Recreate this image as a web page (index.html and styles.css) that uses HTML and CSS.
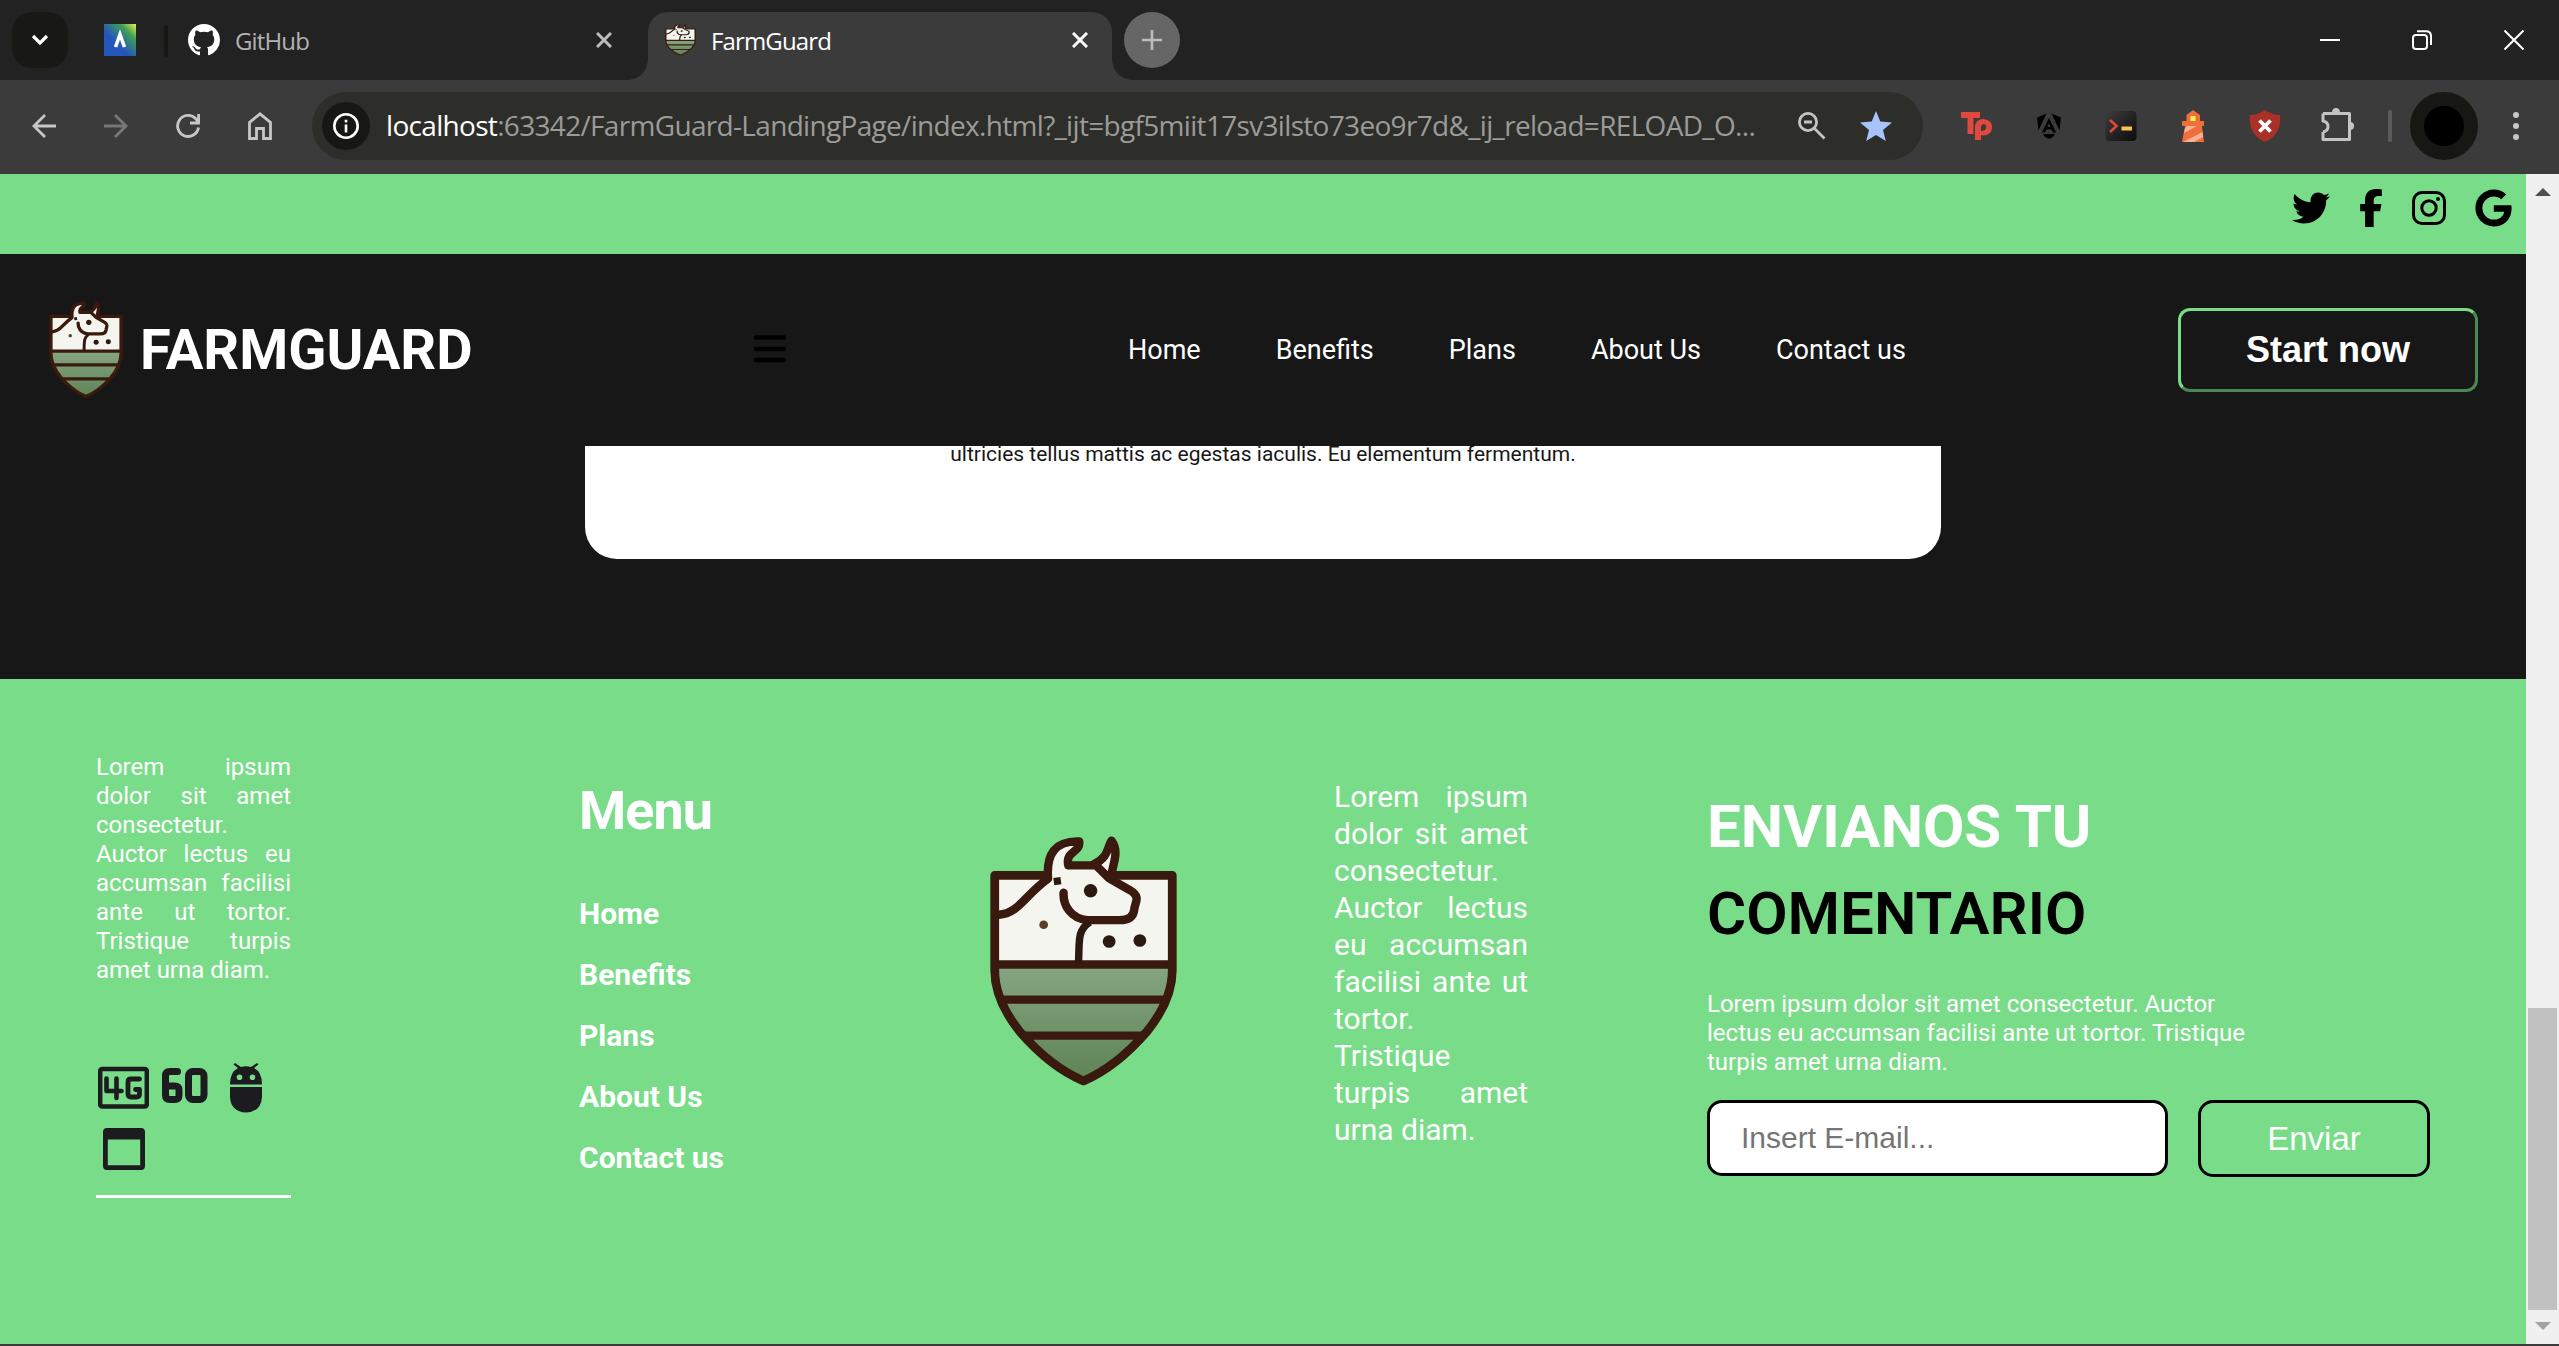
FILE: index.html
```html
<!DOCTYPE html>
<html lang="en">
<head>
<meta charset="utf-8">
<title>FarmGuard</title>
<link rel="stylesheet" href="styles.css">
</head>
<body>
<svg class="defs" aria-hidden="true">
  <defs>
    <linearGradient id="field" x1="0" y1="0" x2="0" y2="1"><stop offset="0" stop-color="#86a581"/><stop offset="1" stop-color="#5c8254"/></linearGradient>
    <linearGradient id="tile" x1="0" y1="1" x2="1" y2="0"><stop offset=".4" stop-color="#2456bd"/><stop offset=".75" stop-color="#3fa056"/><stop offset="1" stop-color="#e8f04a"/></linearGradient>
    <linearGradient id="term" x1="0" y1="0" x2="1" y2="1"><stop offset="0" stop-color="#3c3c3c"/><stop offset="1" stop-color="#0c0c0c"/></linearGradient>
    <clipPath id="shieldclip"><path d="M112 196H634V480Q634 570 560 665Q470 768 373 810Q275 768 187 665Q112 570 112 480Z"/></clipPath>
    <symbol id="shield" viewBox="96 78 554 752" preserveAspectRatio="none">
      <g clip-path="url(#shieldclip)">
        <rect x="100" y="190" width="550" height="275" fill="#f5f5ef"/>
        <rect x="100" y="465" width="550" height="360" fill="url(#field)"/>
        <path d="M100 463H650M100 568H650M100 676H650" stroke="#3a1a0e" stroke-width="25"/>
      </g>
      <path d="M110 196H636V480Q636 570 560 665Q470 770 373 812Q275 770 185 665Q110 570 110 480Z" fill="none" stroke="#3a1a0e" stroke-width="26" stroke-linejoin="round"/>
      <path d="M268 210C262 130 290 95 362 95C366 125 322 125 326 168H412C446 150 440 120 455 92C480 120 466 160 462 200L500 240L400 320L300 240Z" fill="#f5f5ef"/>
      <path d="M122 314C180 310 195 260 268 206C262 130 290 92 360 94C366 128 318 122 328 166H410L448 204L510 240C545 262 525 275 523 300C520 322 505 330 480 330H385C335 325 312 285 314 248" fill="none" stroke="#3a1a0e" stroke-width="25" stroke-linecap="round" stroke-linejoin="round"/>
      <path d="M405 162C448 140 442 115 456 92C480 125 460 160 456 195" fill="none" stroke="#3a1a0e" stroke-width="25" stroke-linecap="round" stroke-linejoin="round"/>
      <path d="M285 215L306 212M392 336C352 360 362 400 358 460" fill="none" stroke="#2c1a10" stroke-width="22"/>
      <circle cx="394" cy="242" r="20" fill="#2c1a10"/><circle cx="449" cy="394" r="19" fill="#2c1a10"/><circle cx="540" cy="391" r="19" fill="#2c1a10"/><circle cx="255" cy="344" r="13" fill="#5c3d26"/>
    </symbol>
  </defs>
</svg>

<div class="tabstrip">
  <div class="tab-search"><svg width="18" height="12" viewBox="0 0 18 12"><path d="M2 2L9 9L16 2" fill="none" stroke="#fff" stroke-width="3.2"/></svg></div>
  <svg class="pinned" width="32" height="32" viewBox="0 0 32 32"><rect width="32" height="32" fill="url(#tile)"/><path d="M11.500 23L16 10.500L20.500 23" fill="none" stroke="#fff" stroke-width="3.600"/></svg>
  <div class="tab-sep"></div>
  <div class="tab">
    <svg width="32" height="32" viewBox="0 0 16 16"><path fill="#fff" d="M8 0C3.58 0 0 3.58 0 8c0 3.54 2.29 6.53 5.47 7.59.4.07.55-.17.55-.38 0-.19-.01-.82-.01-1.49-2.01.37-2.53-.49-2.69-.94-.09-.23-.48-.94-.82-1.13-.28-.15-.68-.52-.01-.53.63-.01 1.08.58 1.23.82.72 1.21 1.87.87 2.33.66.07-.52.28-.87.51-1.07-1.78-.2-3.64-.89-3.64-3.95 0-.87.31-1.59.82-2.15-.08-.2-.36-1.02.08-2.12 0 0 .67-.21 2.2.82.64-.18 1.32-.27 2-.27.68 0 1.36.09 2 .27 1.53-1.04 2.2-.82 2.2-.82.44 1.1.16 1.92.08 2.12.51.56.82 1.27.82 2.15 0 3.07-1.87 3.75-3.65 3.95.29.25.54.73.54 1.48 0 1.07-.01 1.93-.01 2.2 0 .21.15.46.55.38A8.013 8.013 0 0016 8c0-4.42-3.58-8-8-8z"/></svg>
    <span class="tab-title">GitHub</span>
    <svg class="tab-close" width="16" height="16" viewBox="0 0 16 16"><path d="M1 1L15 15M15 1L1 15" stroke="#bdbdbd" stroke-width="3"/></svg>
  </div>
  <div class="tab tab-active">
    <svg width="31" height="32" viewBox="0 0 31 32"><use href="#shield" width="31" height="32"/></svg>
    <span class="tab-title">FarmGuard</span>
    <svg class="tab-close" width="16" height="16" viewBox="0 0 16 16"><path d="M1 1L15 15M15 1L1 15" stroke="#fff" stroke-width="3"/></svg>
  </div>
  <div class="newtab"><svg width="20" height="20" viewBox="0 0 20 20"><path d="M10 0V20M0 10H20" stroke="#bdbdbd" stroke-width="2.600"/></svg></div>
  <div class="window-buttons">
    <svg width="20" height="20" viewBox="0 0 20 20"><path d="M0 10H20" stroke="#fff" stroke-width="2"/></svg>
    <svg width="20" height="20" viewBox="0 0 20 20" fill="none" stroke="#fff" stroke-width="2"><rect x="1" y="5" width="14" height="14" rx="3"/><path d="M5 1.200H14Q19 1.200 19 6V15"/></svg>
    <svg width="20" height="20" viewBox="0 0 20 20"><path d="M.5 .5L19.500 19.500M19.500 .5L.5 19.500" stroke="#fff" stroke-width="2"/></svg>
  </div>
</div>

<div class="toolbar">
  <div class="nav-buttons">
    <svg width="24" height="24" viewBox="0 0 24 24" fill="none" stroke="#c7c7c7" stroke-width="2.800"><path d="M24 12H2M13 1L2 12L13 23"/></svg>
    <svg width="24" height="24" viewBox="0 0 24 24" fill="none" stroke="#777" stroke-width="2.800"><path d="M0 12H22M11 1L22 12L11 23"/></svg>
    <svg width="24" height="24" viewBox="0 0 24 24" fill="none" stroke="#c7c7c7" stroke-width="2.800"><path d="M22.500 13.500A10.500 10.500 0 1 1 20 5L22 8M22.600 0V9H14"/></svg>
    <svg width="24" height="28" viewBox="0 0 24 28" fill="none" stroke="#c7c7c7" stroke-width="2.800"><path d="M1.500 26.500V10.500L12 1.800L22.500 10.500V26.500H15.500V16.500H8.500V26.500Z"/></svg>
  </div>
  <div class="omnibox">
    <div class="site-info"><svg width="26" height="26" viewBox="0 0 26 26"><circle cx="13" cy="13" r="11.700" fill="none" stroke="#fff" stroke-width="2.600"/><path d="M13 11.500V19.500M13 6.800V9.400" stroke="#fff" stroke-width="2.600"/></svg></div>
    <span class="url"><b>localhost</b>:63342/FarmGuard-LandingPage/index.html?_ijt=bgf5miit17sv3ilsto73eo9r7d&amp;_ij_reload=RELOAD_O...</span>
    <svg class="zoom" width="28" height="28" viewBox="0 0 28 28" fill="none" stroke="#c4c4c4" stroke-width="2.800"><circle cx="10" cy="10" r="8.600"/><path d="M16 16L26.500 26.500M6 10H14"/></svg>
    <svg class="star" width="32" height="30" viewBox="0 0 32 30"><path fill="#a8c3fa" d="M16 0L20.300 10.500L32 11.500L23 19L25.800 30L16 24L6.200 30L9 19L0 11.500L11.700 10.500Z"/></svg>
  </div>
  <div class="extensions">
    <svg width="32" height="32" viewBox="0 0 32 32" fill="#e0493e"><path d="M0 2H19V8H12.500V24H6.500V8H0Z"/><path fill-rule="evenodd" d="M14 16Q15 9 22.500 9Q31 10 31 17Q31 25 22.500 25.500L20 25V30H14ZM20 17V21Q25 21 25.300 17Q25 14 22.500 14Q20 14.500 20 17Z"/></svg>
    <svg width="32" height="32" viewBox="0 0 32 32"><path d="M13.500 3.500L4 7.500L5.500 20.500ZM18.500 3.500L28 7.500L26.500 20.500ZM16 8L8.800 22.500H12L13.500 19.500H18.500L20 22.500H23.200ZM16 13L17.500 17H14.500ZM10 24H22L20 27L16 29L12 27Z"/></svg>
    <svg width="32" height="32" viewBox="0 0 32 32"><rect x=".5" y="1" width="31" height="30" rx="4" fill="url(#term)"/><path d="M5 10L11.500 16L5 22" fill="none" stroke="#e0483e" stroke-width="2.600"/><path d="M16.500 18.500H27" stroke="#f5c452" stroke-width="4"/></svg>
    <svg width="32" height="32" viewBox="0 0 32 32"><path fill="#ef6f3c" d="M9.500 5L16 0L23 5V11H27V16H25L27 32H5L8 16H5V11H9.500Z"/><path fill="#f7b196" d="M8 19L10 16H20L7 23ZM6 32L25.500 22L26 27L17 32Z"/><path fill="#fff04d" d="M13.500 6H18.500V11H13.500Z"/></svg>
    <svg width="32" height="32" viewBox="0 0 32 32"><path fill="#ab3128" d="M16 0Q23 5 31 5Q33 24 16 32Q-1 24 1 5Q9 5 16 0Z"/><path d="M10.500 10.500L21.500 21.500M21.500 10.500L10.500 21.500" stroke="#fff" stroke-width="3.800"/></svg>
    <svg class="puzzle" width="34" height="34" viewBox="0 0 34 34"><path d="M2 6.500H28.500V16M28.500 22V32.500H2V25M2 25Q7 24 7 19.500Q7 15 2 14V6.500M28.500 6.500V32.500" fill="none" stroke="#c4c4c4" stroke-width="3" stroke-linejoin="round"/><path fill="#c4c4c4" d="M11 6Q11 1 15 1Q19 1 19 6ZM29 15Q33 15 33 19Q33 23 29 23Z"/></svg>
  </div>
  <div class="ext-sep"></div>
  <div class="avatar"></div>
  <svg class="kebab" width="8" height="28" viewBox="0 0 8 28" fill="#c7c7c7"><circle cx="4" cy="3" r="3"/><circle cx="4" cy="14" r="3"/><circle cx="4" cy="25" r="3"/></svg>
</div>

<div class="viewport">
  <main class="page">
    <div class="social">
      <svg width="38" height="38" viewBox="0 0 512 512"><path d="M459.37 151.716c.325 4.548.325 9.097.325 13.645 0 138.72-105.583 298.558-298.558 298.558-59.452 0-114.68-17.219-161.137-47.106 8.447.974 16.568 1.299 25.34 1.299 49.055 0 94.213-16.568 130.274-44.832-46.132-.975-84.792-31.188-98.112-72.772 6.498.974 12.995 1.624 19.818 1.624 9.421 0 18.843-1.3 27.614-3.573-48.081-9.747-84.143-51.98-84.143-102.985v-1.299c13.969 7.797 30.214 12.67 47.431 13.319-28.264-18.843-46.781-51.005-46.781-87.391 0-19.492 5.197-37.36 14.294-52.954 51.655 63.675 129.3 105.258 216.365 109.807-1.624-7.797-2.599-15.918-2.599-24.04 0-57.828 46.782-104.934 104.934-104.934 30.213 0 57.502 12.67 76.67 33.137 23.715-4.548 46.456-13.32 66.599-25.34-7.798 24.366-24.366 44.833-46.132 57.827 21.117-2.273 41.584-8.122 60.426-16.243-14.292 20.791-32.161 39.308-52.628 54.253z"/></svg>
      <svg width="24" height="38" viewBox="0 0 320 512"><path d="M80 299.3V512H196V299.3h86.500l18-97.800H196V166.900c0-51.700 20.300-71.500 72.700-71.500c16.300 0 29.400 .4 37 1.200V7.900C291.400 4 256.400 0 236.200 0C129.300 0 80 50.500 80 159.400v42.100H14v97.800H80z"/></svg>
      <svg width="34" height="34" viewBox="0 0 34 34"><rect x="1.500" y="1.500" width="31" height="31" rx="8.500" fill="none" stroke="#000" stroke-width="3"/><circle cx="17" cy="17" r="7.200" fill="none" stroke="#000" stroke-width="3"/><circle cx="26" cy="8" r="2" /></svg>
      <svg width="37" height="38" viewBox="0 0 488 512"><path d="M488 261.8C488 403.3 391.1 504 248 504 110.8 504 0 393.2 0 256S110.800 8 248 8c66.800 0 123 24.500 166.300 64.900l-67.500 64.900C258.500 52.600 94.300 116.600 94.300 256c0 86.500 69.100 156.600 153.700 156.600 98.200 0 135-70.400 140.800-106.900H248v-85.300h236.100c2.300 12.700 3.900 24.900 3.900 41.400z"/></svg>
    </div>
    <header class="header">
      <svg class="brand-mark" width="74" height="98" viewBox="0 0 74 98"><use href="#shield" width="74" height="98"/></svg>
      <h1 class="brand">FARMGUARD</h1>
      <svg class="burger" width="32" height="28" viewBox="0 0 32 28"><path d="M2 2.500H30M2 14H30M2 25H30" stroke="#000" stroke-width="4.500" stroke-linecap="round"/></svg>
      <nav class="links"><a>Home</a><a>Benefits</a><a>Plans</a><a>About Us</a><a>Contact us</a></nav>
      <button class="start">Start now</button>
    </header>
    <section class="plans">
      <div class="card"><p>ultricies tellus mattis ac egestas iaculis. Eu elementum fermentum.</p></div>
    </section>
    <footer class="footer">
      <div class="about">
        <p class="small">Lorem ipsum dolor sit amet consectetur. Auctor lectus eu accumsan facilisi ante ut tortor. Tristique turpis amet urna diam.</p>
        <div class="badges">
          <svg width="51" height="50" viewBox="0 0 51 50" fill="none" stroke="#1c1b1f" stroke-linejoin="round" stroke-linecap="round"><rect x="2.200" y="6" width="46.600" height="37.500" rx="2" stroke-width="4.500"/><path stroke-width="4.600" d="M8.500 15.500V28H23.500M18.500 15.500V35"/><path stroke-width="4.800" d="M41.500 16H33Q30 16 30 19V31Q30 34 33 34H38.500Q41.500 34 41.500 31V26.500H37.500"/></svg>
          <svg width="48" height="50" viewBox="0 0 48 50" fill="none" stroke="#1c1b1f" stroke-width="7" stroke-linejoin="round" stroke-linecap="round"><path d="M16.500 8.500H9Q4.500 8.500 4.500 13V32Q4.500 36.500 9 36.500H13.500Q18 36.500 18 32.500V27Q18 23 13.500 23H5" /><rect x="27.500" y="8.500" width="15.500" height="28" rx="4.500"/></svg>
          <svg width="32" height="50" viewBox="0 0 32 50"><path fill="#1c1b1f" fill-rule="evenodd" d="M0 21.500Q0 9 8 5L3.500 1.500L5 0L11 4Q16 2.500 21 4L27 0L28.500 1.500L24 5Q32 9 32 21.500ZM9.500 11.500A2.800 2.800 0 1 0 9.500 17.100A2.800 2.800 0 1 0 9.500 11.500ZM22.500 11.500A2.800 2.800 0 1 0 22.500 17.100A2.800 2.800 0 1 0 22.500 11.500ZM0 24H32V34Q31 49 16 49.500Q1 49 0 34Z"/></svg>
          <svg width="42" height="42" viewBox="0 0 42 42"><path fill="#1c1b1f" fill-rule="evenodd" d="M4 0H38Q42 0 42 4V38Q42 42 38 42H4Q0 42 0 38V4Q0 0 4 0ZM4.800 11.500V37.200H37.200V11.500Z"/></svg>
        </div>
      </div>
      <div class="menu">
        <h2>Menu</h2>
        <a>Home</a><a>Benefits</a><a>Plans</a><a>About Us</a><a>Contact us</a>
      </div>
      <svg class="footer-mark" width="187" height="251" viewBox="0 0 187 251"><use href="#shield" width="187" height="251"/></svg>
      <p class="blurb">Lorem ipsum dolor sit amet consectetur. Auctor lectus eu accumsan facilisi ante ut tortor. Tristique turpis amet urna diam.</p>
      <div class="contact">
        <h2>ENVIANOS TU<br><span>COMENTARIO</span></h2>
        <p class="contact-text">Lorem ipsum dolor sit amet consectetur. Auctor lectus eu accumsan facilisi ante ut tortor. Tristique turpis amet urna diam.</p>
        <form class="form"><input type="text" placeholder="Insert E-mail..."><button type="button">Enviar</button></form>
      </div>
    </footer>
  </main>
  <div class="scrollbar">
    <svg width="16" height="8" viewBox="0 0 16 8"><path d="M0 8L8 0L16 8Z" fill="#505050"/></svg>
    <div class="thumb"></div>
    <svg width="16" height="8" viewBox="0 0 16 8"><path d="M0 0L8 8L16 0Z" fill="#a3a3a3"/></svg>
  </div>
</div>
</body>
</html>
```
FILE: styles.css
```css
* { box-sizing: border-box; margin: 0; padding: 0; }
body {
  width: 2559px; height: 1346px; overflow: hidden;
  display: flex; flex-direction: column;
  background: #3b3b3b; color: #fff;
  font-family: Roboto, sans-serif;
}
svg { display: block; flex: none; }
.defs { position: absolute; width: 0; height: 0; }

/* browser chrome */
.tabstrip {
  height: 80px; flex: none; padding: 12px 35px 0 12px;
  display: flex; align-items: flex-start;
  background: #222; font: 24px/56px "Open Sans", sans-serif;
}
.tab-search {
  width: 56px; height: 56px; border-radius: 20px; background: #181914;
  display: flex; align-items: center; justify-content: center;
}
.pinned { margin: 12px 28px 0 36px; }
.tab-sep { width: 4px; height: 32px; margin-top: 13px; border-radius: 2px; background: #171814; }
.tab { width: 480px; height: 68px; padding: 0 36px 12px 20px; display: flex; align-items: center; }
.tab-title { flex: 1; margin-left: 15px; padding-top: 2px; line-height: 54px; color: #b2b2b2; letter-spacing: -0.85px; }
.tab-active {
  position: relative; width: 464px; padding: 0 24px 12px 17px;
  border-radius: 20px 20px 0 0; background: #3b3b3b;
}
.tab-active .tab-title { color: #fff; }
.tab-active::before, .tab-active::after {
  content: ""; position: absolute; bottom: 0; width: 20px; height: 20px;
}
.tab-active::before { left: -20px; background: radial-gradient(circle at 0 0, #222 19.500px, #3b3b3b 20px); }
.tab-active::after { right: -20px; background: radial-gradient(circle at 100% 0, #222 19.500px, #3b3b3b 20px); }
.newtab {
  width: 56px; height: 56px; margin-left: 12px; border-radius: 50%; background: #666;
  display: flex; align-items: center; justify-content: center;
}
.window-buttons { margin: 18px 0 0 auto; display: flex; gap: 72px; }

.toolbar { height: 94px; flex: none; padding: 12px 39px 14px 32px; display: flex; align-items: center; }
.nav-buttons { width: 280px; display: flex; align-items: center; gap: 48px; }
.omnibox {
  width: 1611px; height: 68px; padding: 0 31px 0 10px; border-radius: 34px;
  display: flex; align-items: center; background: #2d2e2a;
}
.site-info {
  width: 48px; height: 48px; border-radius: 50%; background: #171814;
  display: flex; align-items: center; justify-content: center;
}
.url {
  flex: 1; margin-left: 16px; padding-bottom: 2px; white-space: nowrap;
  font: 28px/40px "Open Sans", sans-serif; letter-spacing: -0.68px; color: #9b9b98;
}
.url b { font-weight: 400; color: #fff; }
.star { margin-left: 34px; }
.extensions { display: flex; align-items: center; gap: 40px; margin-left: 38px; }
.puzzle { margin-bottom: 4px; }
.ext-sep { width: 4px; height: 32px; margin-left: 33px; border-radius: 2px; background: #5c5c5c; }
.avatar { width: 68px; height: 68px; margin-left: 18px; border: 14px solid #171814; border-radius: 50%; background: #000; }
.kebab { margin-left: auto; }

/* page */
.viewport { height: 1170px; display: flex; }
.page { width: 2526px; }
.social {
  height: 80px; padding: 0 14px 12px 0; background: #79dc89;
  display: flex; align-items: center; justify-content: flex-end; gap: 29px;
}
.header { height: 192px; padding: 0 48px 0 49px; display: flex; align-items: center; background: #171717; }
.brand { margin-left: 17px; width: 614px; font-size: 56px; line-height: 64px; font-weight: 700; }
.burger { margin: 0 342px 2px 0; }
.links { display: flex; gap: 75px; font-size: 27px; line-height: 40px; white-space: nowrap; }
.start {
  width: 300px; height: 84px; margin-left: auto; border: 3px outset #79dc89; border-radius: 12px;
  background: transparent; color: #fff; font: bold 36px "Liberation Sans", sans-serif;
}
.plans { height: 233px; padding: 0 585px 120px; background: #171717; }
.card { height: 113px; border-radius: 0 0 32px 32px; background: #fff; color: #171717; text-align: center; overflow: hidden; }
.card p { margin-top: -4px; font-size: 21px; line-height: 24px; }

.footer {
  height: 665px; padding: 0 0 0 96px; background: #79dc89;
  display: grid; grid-template-columns: 483px 411px 344px 373px 1fr; align-items: start;
}
.about { width: 195px; height: 445px; margin-top: 74px; border-bottom: 3px solid #fff; }
.small { font-size: 24px; line-height: 29px; text-align: justify; }
.badges { display: flex; flex-wrap: wrap; width: 180px; margin-top: 78px; padding-left: 2px; gap: 16px 12px; }
.badges svg:nth-child(3) { margin-left: 9px; }
.badges svg:nth-child(4) { margin: -1px 0 0 5px; }
.menu { display: flex; flex-direction: column; margin-top: 100px; font-weight: 700; }
.menu h2 { font-size: 54px; line-height: 64px; margin-bottom: 40px; letter-spacing: -1px; }
.menu a { font-size: 30px; line-height: 61px; }
.footer-mark { margin-top: 157px; }
.blurb { width: 194px; margin-top: 99px; font-size: 30px; line-height: 37px; text-align: justify; }
.contact { margin-top: 104px; }
.contact h2 { font-size: 60px; line-height: 87px; font-weight: 700; }
.contact h2 span { color: #000; font-weight: 600; }
.contact-text { width: 560px; margin-top: 33px; font-size: 24px; line-height: 29px; }
.form { display: flex; gap: 30px; margin-top: 23px; }
.form input {
  width: 461px; height: 76px; padding: 0 31px; border: 3px solid #000; border-radius: 15px;
  background: #fff; font: 30px "Liberation Sans", sans-serif;
}
.form input::placeholder { color: #757575; }
.form button {
  width: 232px; height: 77px; border: 3px solid #000; border-radius: 15px; background: transparent;
  color: #fff; font: 33px "Liberation Sans", sans-serif;
}

.scrollbar {
  width: 33px; padding: 14px 2px; background: #f0f0f0;
  display: flex; flex-direction: column; align-items: center;
}
.thumb { width: 29px; height: 302px; margin: auto 0 12px; background: #c1c1c1; }
```
